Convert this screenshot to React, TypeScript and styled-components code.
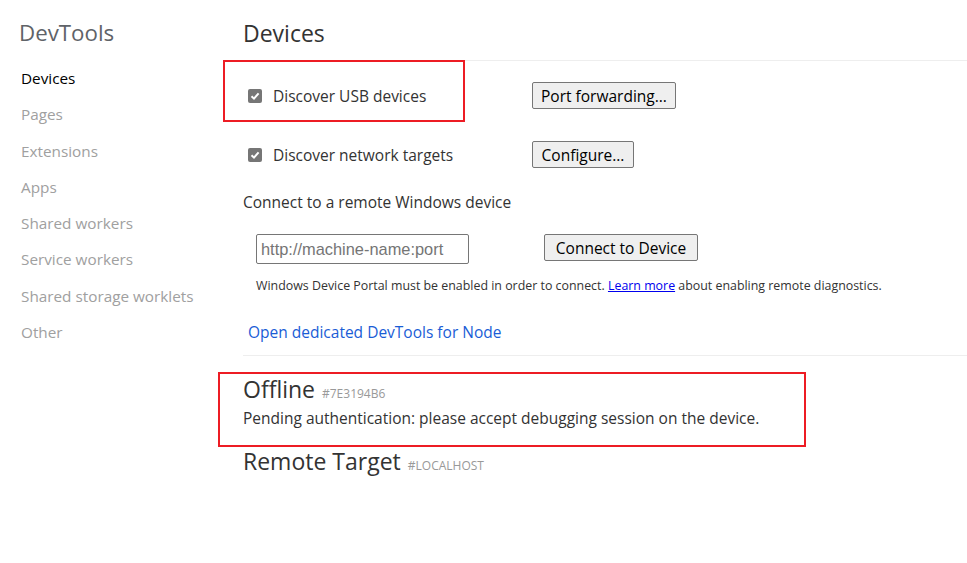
import React from 'react';
import styled, { createGlobalStyle } from 'styled-components';

const GlobalStyle = createGlobalStyle`
    body {
        margin: 0;
        background: #fff;
        font-family: "Open Sans", "Noto Sans", sans-serif;
        color: #333;
    }
`;

const Page = styled.div`
    display: flex;
    min-height: 563px;
`;

const Sidebar = styled.nav`
    width: 243px;
    flex-shrink: 0;
    padding-top: 17px;
`;

const SidebarTitle = styled.div`
    padding-left: 19px;
    font-size: 22.3px;
    line-height: 32px;
    color: #5f6368;
    margin-bottom: 19px;
`;

const NavItem = styled.div<{ $active?: boolean }>`
    padding-left: 21px;
    font-size: 15.3px;
    line-height: 20px;
    height: 36.3px;
    color: ${p => (p.$active ? '#000' : '#a0a0a0')};
`;

const Main = styled.main`
    flex: 1;
`;

const Header = styled.div`
    height: 61px;
    box-sizing: border-box;
    padding-top: 18px;
    border-bottom: 1px solid #eee;
`;

const Title = styled.h1`
    margin: 0;
    font-size: 23px;
    font-weight: normal;
    line-height: 30px;
    color: #333;
`;

const OptionGrid = styled.div`
    display: grid;
    grid-template-columns: 289px auto;
    row-gap: 32px;
    margin-top: 21px;
    align-items: center;
`;

const Highlight = styled.div<{ $inset: string }>`
    position: relative;
    &::after {
        content: '';
        position: absolute;
        inset: ${p => p.$inset};
        border: 2px solid #ed1c24;
        pointer-events: none;
    }
`;

const CheckRow = styled.label`
    display: flex;
    align-items: center;
    gap: 11px;
    padding-left: 5px;
    padding-top: 1px;
    font-size: 15.5px;
    line-height: 20px;
    color: #333;
`;

const CheckBox = styled.span`
    width: 14px;
    height: 14px;
    border-radius: 2px;
    background: #767676;
    display: flex;
    align-items: center;
    justify-content: center;
`;

const Button = styled.button<{ $width: number }>`
    width: ${p => p.$width}px;
    height: 27px;
    box-sizing: border-box;
    padding: 0;
    background: #efefef;
    border: 1px solid #767676;
    border-radius: 2px;
    font-family: inherit;
    font-size: 15.5px;
    color: #000;
    white-space: nowrap;
`;

const SectionText = styled.div`
    margin-top: 24px;
    font-size: 15.5px;
    line-height: 20px;
    color: #333;
`;

const ConnectRow = styled.div`
    display: grid;
    grid-template-columns: 288px auto;
    margin-top: 22px;
    padding-left: 13px;
    align-items: start;
`;

const AddressInput = styled.input`
    width: 213px;
    height: 30px;
    box-sizing: border-box;
    border: 1px solid #767676;
    border-radius: 2px;
    padding: 0 4px;
    font-family: "Liberation Sans", Arial, sans-serif;
    font-size: 16.4px;
    &::placeholder {
        color: #757575;
    }
`;

const Note = styled.div`
    margin-top: 14px;
    padding-left: 13px;
    font-size: 12.4px;
    line-height: 16px;
    color: #333;
    a {
        color: #0000ee;
        text-decoration: underline;
    }
`;

const NodeLink = styled.div`
    margin-top: 28px;
    padding-left: 5px;
    font-size: 15.5px;
    line-height: 20px;
    color: #1a5dd6;
    padding-bottom: 13px;
    border-bottom: 1px solid #eee;
`;

const Devices = styled.div`
    margin-top: 19px;
`;

const DeviceTitle = styled.div`
    font-size: 23px;
    line-height: 28px;
    color: #333;
    display: flex;
    align-items: baseline;
    gap: 7px;
`;

const DeviceId = styled.span`
    font-size: 12px;
    color: #999;
`;

const DeviceStatus = styled.div`
    font-size: 15.5px;
    line-height: 20px;
    color: #333;
    padding-bottom: 19px;
`;

const Check = () => (
    <svg width="10" height="10" viewBox="0 0 10 10">
        <path d="M1.5 5.2 L4 7.6 L8.6 2.4" fill="none" stroke="#fff" strokeWidth="2" />
    </svg>
);

const navItems = [
    'Devices',
    'Pages',
    'Extensions',
    'Apps',
    'Shared workers',
    'Service workers',
    'Shared storage worklets',
    'Other',
];

export default function App() {
    return (
        <Page>
            <GlobalStyle />
            <Sidebar>
                <SidebarTitle>DevTools</SidebarTitle>
                {navItems.map(item => (
                    <NavItem key={item} $active={item === 'Devices'}>
                        {item}
                    </NavItem>
                ))}
            </Sidebar>
            <Main>
                <Header>
                    <Title>Devices</Title>
                </Header>

                <OptionGrid>
                    <Highlight $inset="-25px 67px -16px -20px">
                        <CheckRow>
                            <CheckBox><Check /></CheckBox>
                            Discover USB devices
                        </CheckRow>
                    </Highlight>
                    <div><Button $width={144}>Port forwarding...</Button></div>

                    <CheckRow>
                        <CheckBox><Check /></CheckBox>
                        Discover network targets
                    </CheckRow>
                    <div><Button $width={102}>Configure...</Button></div>
                </OptionGrid>

                <SectionText>Connect to a remote Windows device</SectionText>

                <ConnectRow>
                    <AddressInput placeholder="http://machine-name:port" />
                    <Button $width={154}>Connect to Device</Button>
                </ConnectRow>

                <Note>
                    Windows Device Portal must be enabled in order to connect. <a>Learn more</a> about enabling remote diagnostics.
                </Note>

                <NodeLink>Open dedicated DevTools for Node</NodeLink>

                <Devices>
                    <Highlight $inset="-3px 161px 0 -25px">
                        <DeviceTitle>
                            Offline <DeviceId>#7E3194B6</DeviceId>
                        </DeviceTitle>
                        <DeviceStatus>Pending authentication: please accept debugging session on the device.</DeviceStatus>
                    </Highlight>
                    <DeviceTitle>
                        Remote Target <DeviceId>#LOCALHOST</DeviceId>
                    </DeviceTitle>
                </Devices>
            </Main>
        </Page>
    );
}
